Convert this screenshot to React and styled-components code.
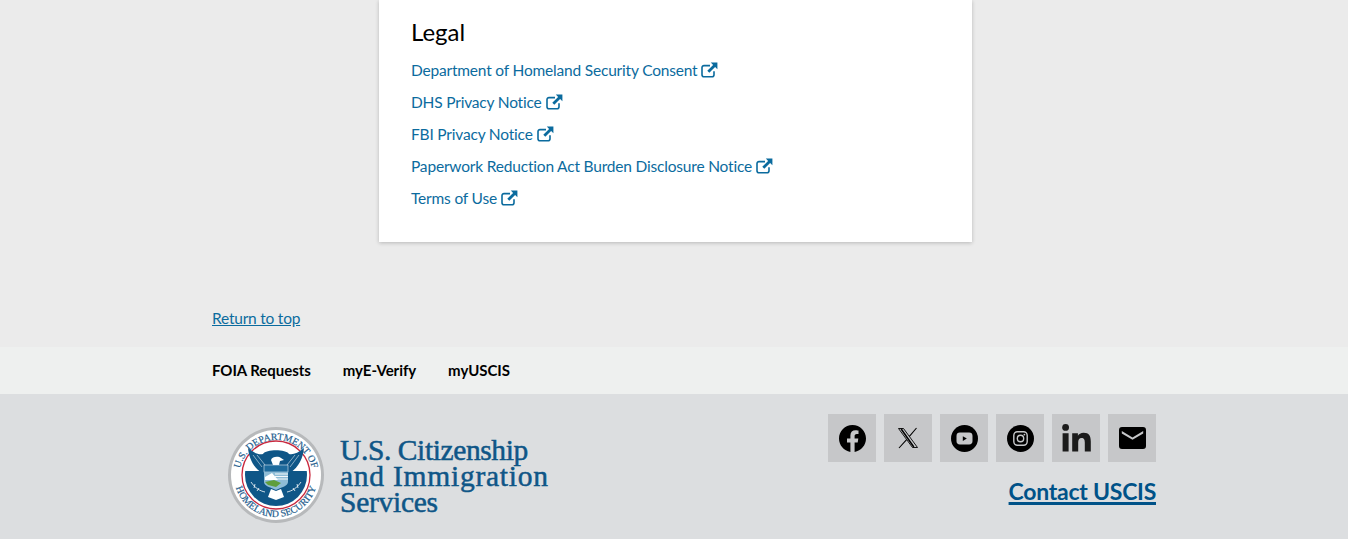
import React from 'react';
import styled, { createGlobalStyle } from 'styled-components';

const GlobalStyle = createGlobalStyle`
  html, body {
    margin: 0;
    padding: 0;
    background: #ebebeb;
    font-family: 'Lato', 'Open Sans', sans-serif;
  }
`;

const Page = styled.div`
  display: flex;
  flex-direction: column;
  height: 539px;
  overflow: hidden;
`;

const Main = styled.main`
  padding: 0 192px 0 212px;
`;

const Card = styled.section`
  width: 593px;
  margin-left: 167px;
  padding: 16px 32px 32px;
  box-sizing: border-box;
  background: #fff;
  box-shadow: 0 1px 4px rgba(0, 0, 0, 0.22);
`;

const Heading = styled.h2`
  margin: 0 0 11px;
  font-size: 24px;
  line-height: 31px;
  font-weight: 400;
  color: #000;
`;

const LinkList = styled.ul`
  display: flex;
  flex-direction: column;
  gap: 8px;
  margin: 0;
  padding: 0;
  list-style: none;
`;

const LegalLink = styled.a`
  display: inline-flex;
  align-items: center;
  gap: 4px;
  height: 24px;
  font-size: 15.5px;
  letter-spacing: -0.19px;
  color: #0b6b9e;
  text-decoration: none;
`;

const ReturnLink = styled.a`
  display: block;
  width: max-content;
  margin: 66px 0 19px;
  font-size: 15.5px;
  line-height: 20px;
  letter-spacing: -0.22px;
  color: #0b6b9e;
  text-decoration: underline;
`;

const NavBand = styled.nav`
  display: flex;
  align-items: center;
  gap: 32px;
  height: 45px;
  padding: 0 0 2px 212px;
  background: #eef0ef;
`;

const NavLink = styled.a`
  font-size: 15px;
  font-weight: 700;
  letter-spacing: -0.05px;
  color: #000;
  text-decoration: none;
`;

const Footer = styled.footer`
  flex: 1;
  display: flex;
  justify-content: space-between;
  padding: 20px 192px 0 228px;
  background: #dcdee0;
`;

const Brand = styled.div`
  display: flex;
  align-items: center;
  gap: 16px;
  height: 96px;
  margin-top: 13px;
`;

const BrandName = styled.div`
  display: flex;
  flex-direction: column;
  padding-top: 2px;
  font-family: 'Liberation Serif', serif;
  font-size: 29.5px;
  line-height: 26px;
  color: #0f5687;
  -webkit-text-stroke: 0.5px #0f5687;
`;

const BrandLine = styled.span`
  letter-spacing: ${(p) => p.$track}px;
`;

const Contact = styled.div`
  display: flex;
  flex-direction: column;
  align-items: flex-end;
  gap: 13px;
`;

const Socials = styled.div`
  display: flex;
  gap: 8px;
`;

const Tile = styled.a`
  display: flex;
  align-items: center;
  justify-content: center;
  width: 48px;
  height: 48px;
  background: #c6c7c9;
  color: ${(p) => p.$ink || '#000'};
`;

const ContactLink = styled.a`
  font-size: 23px;
  line-height: 32px;
  font-weight: 700;
  letter-spacing: -0.26px;
  color: #005288;
  text-decoration: underline;
  text-decoration-thickness: 2.5px;
`;

const ExternalIcon = () => (
  <svg width="17" height="16" viewBox="0 0 17 16" fill="none" aria-hidden="true">
    <path d="M13 9.200v3.600a2 2 0 0 1-2 2H3a2 2 0 0 1-2-2V5.600a2 2 0 0 1 2-2h6" stroke="currentColor" strokeWidth="1.600" />
    <path d="M9.800 0.600H16.400V7.200L14.100 4.900 8.300 10.700 6.300 8.700 12.100 2.900Z" fill="currentColor" />
  </svg>
);

const Facebook = () => (
  <svg width="27" height="27" viewBox="0 0 27 27">
    <path fill="currentColor" d="M27 13.500C27 6 21 0 13.500 0S0 6 0 13.500c0 6.700 4.900 12.300 11.400 13.400v-9.500H8v-3.900h3.400v-3c0-3.400 2-5.200 5.100-5.200 1.500 0 3 .3 3 .3v3.300h-1.700c-1.700 0-2.200 1-2.200 2.100v2.500h3.700l-.6 3.900h-3.100v9.500C22.100 25.800 27 20.200 27 13.500z" />
  </svg>
);

const XLogo = () => (
  <svg width="24" height="24" viewBox="0 0 24 24" fill="none" stroke="currentColor">
    <path strokeWidth="0.900" d="M2.500 2.500h5L21.500 21.500h-5z" />
    <path strokeWidth="1.100" d="M20.500 2L13.400 10.300M10.600 13.600L3 22" />
    <path strokeWidth="1.500" d="M5.200 3L17.800 21" />
  </svg>
);

const Youtube = () => (
  <svg width="27" height="27" viewBox="0 0 27 27">
    <circle cx="13.500" cy="13.500" r="13.500" fill="currentColor" />
    <rect x="5.500" y="7.500" width="16" height="12" rx="3.400" fill="#c6c7c9" />
    <path d="M11.800 11.200l4 2.400-4 2.400z" fill="currentColor" />
  </svg>
);

const Instagram = () => (
  <svg width="27" height="27" viewBox="0 0 27 27" fill="none">
    <circle cx="13.500" cy="13.500" r="13.500" fill="currentColor" />
    <rect x="6.800" y="6.800" width="13.400" height="13.400" rx="3.600" stroke="#c6c7c9" strokeWidth="1.400" />
    <circle cx="13.500" cy="13.500" r="3.200" stroke="#c6c7c9" strokeWidth="1.400" />
    <circle cx="17.400" cy="9.600" r="0.900" fill="#c6c7c9" />
  </svg>
);

const Linkedin = () => (
  <svg width="29" height="28" viewBox="0 0 29 28">
    <circle cx="3.600" cy="3.400" r="3.400" fill="currentColor" />
    <path fill="currentColor" d="M.6 9.200h6v18.400h-6zM10.200 9.200h5.700v2.600c.9-1.600 2.900-3 5.700-3 5.500 0 7.200 3.400 7.200 8.600v10.200h-6v-9c0-2.300-.5-4.500-3.100-4.500s-3.500 2-3.500 4.400v9.100h-6z" />
  </svg>
);

const Mail = () => (
  <svg width="27" height="22" viewBox="0 0 27 22">
    <path fill="currentColor" d="M3 0h21a3 3 0 0 1 3 3v16a3 3 0 0 1-3 3H3a3 3 0 0 1-3-3V3a3 3 0 0 1 3-3zm-.2 4.100v2.300l10.700 6.300 10.700-6.300V4.100l-10.700 6.300z" />
  </svg>
);

const Seal = () => (
  <svg width="96" height="96" viewBox="0 0 96 96" aria-label="DHS seal">
    <defs>
      <path id="arcTop" d="M11.500 56A37 37 0 1 1 84.500 56" />
      <path id="arcBottom" d="M6.600 41A42 42 0 1 0 89.400 41" />
      <clipPath id="lowerDisc">
        <rect x="0" y="44" width="96" height="52" />
      </clipPath>
    </defs>
    <circle cx="48" cy="48" r="48" fill="#b7b9bb" />
    <circle cx="48" cy="48" r="45" fill="#fff" />
    <circle cx="48" cy="48" r="34" fill="none" stroke="#c9283e" strokeWidth="1.300" />
    <text fontFamily="'Liberation Serif', serif" fontSize="9.800" fill="#1d5c8d" stroke="#1d5c8d" strokeWidth="0.200">
      <textPath href="#arcTop" startOffset="50%" textAnchor="middle">U.S. DEPARTMENT OF</textPath>
    </text>
    <text fontFamily="'Liberation Serif', serif" fontSize="9.800" fill="#1d5c8d" stroke="#1d5c8d" strokeWidth="0.200">
      <textPath href="#arcBottom" startOffset="50%" textAnchor="middle">HOMELAND SECURITY</textPath>
    </text>
    <circle cx="48" cy="48" r="31" fill="#0f5687" clipPath="url(#lowerDisc)" />
    <path fill="#0f5687" d="M20 21C26 26 31 28 35 27C38 22 58 22 61 27C65 28 70 26 76 21C75 31 71 40 62 46H34C25 40 21 31 20 21Z" />
    <path fill="#fff" d="M43 33C44 29 51 29 53 31L56 33L52 34L51 38H45Z" />
    <path stroke="#dce8f0" strokeWidth="0.600" fill="none" d="M25 28L34 40M29 28L37 38M71 28L62 40M67 28L59 38" />
    <rect x="36" y="38" width="24" height="7" fill="#1d6a9c" stroke="#dce8f0" strokeWidth="0.600" />
    <path fill="#8fbcd6" d="M36 45H60V55C60 59 54 60 48 63C42 60 36 59 36 55Z" />
    <path stroke="#fff" strokeWidth="0.900" fill="none" d="M47 47H60M47 49.500H60M47 52H60" />
    <path fill="#fff" d="M37 50L44 46L50 53H37Z" />
    <path fill="#5f9e3c" d="M37 55L46 53L53 56L48 60L40 58Z" />
    <path fill="#fff" d="M43 62L48 64L53 62L56 70L48 73L40 70Z" />
    <path stroke="#fff" strokeWidth="0.800" fill="none" d="M23 55C27 61 32 64 37 65M27 57L26 61M31 61L29 64M73 55C69 61 64 64 59 65M69 57L70 61M65 61L67 64" />
  </svg>
);

const legalLinks = [
  'Department of Homeland Security Consent',
  'DHS Privacy Notice',
  'FBI Privacy Notice',
  'Paperwork Reduction Act Burden Disclosure Notice',
  'Terms of Use',
];

const App = () => (
  <Page>
    <GlobalStyle />
    <Main>
      <Card>
        <Heading>Legal</Heading>
        <LinkList>
          {legalLinks.map((label) => (
            <li key={label}>
              <LegalLink href="#">
                {label}
                <ExternalIcon />
              </LegalLink>
            </li>
          ))}
        </LinkList>
      </Card>
      <ReturnLink href="#">Return to top</ReturnLink>
    </Main>
    <NavBand>
      <NavLink href="#">FOIA Requests</NavLink>
      <NavLink href="#">myE-Verify</NavLink>
      <NavLink href="#">myUSCIS</NavLink>
    </NavBand>
    <Footer>
      <Brand>
        <Seal />
        <BrandName>
          <BrandLine $track={-0.4}>U.S. Citizenship</BrandLine>
          <BrandLine $track={0.75}>and Immigration</BrandLine>
          <BrandLine $track={-0.27}>Services</BrandLine>
        </BrandName>
      </Brand>
      <Contact>
        <Socials>
          <Tile href="#" aria-label="Facebook"><Facebook /></Tile>
          <Tile href="#" aria-label="X"><XLogo /></Tile>
          <Tile href="#" aria-label="YouTube"><Youtube /></Tile>
          <Tile href="#" aria-label="Instagram"><Instagram /></Tile>
          <Tile href="#" $ink="#1b1b1b" aria-label="LinkedIn"><Linkedin /></Tile>
          <Tile href="#" aria-label="Email"><Mail /></Tile>
        </Socials>
        <ContactLink href="#">Contact USCIS</ContactLink>
      </Contact>
    </Footer>
  </Page>
);

export default App;
